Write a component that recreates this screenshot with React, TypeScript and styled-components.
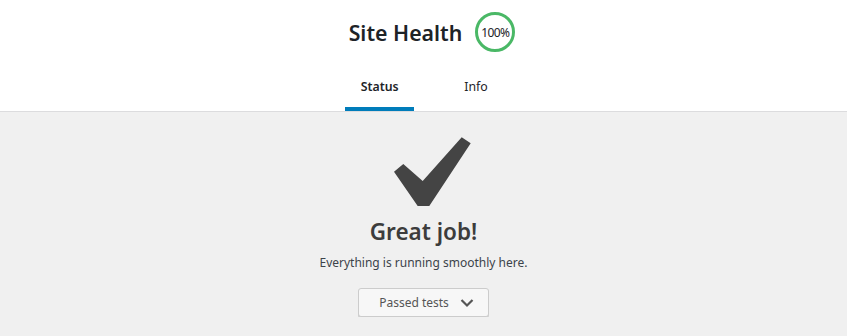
import React from "react";
import styled, { createGlobalStyle } from "styled-components";

const GlobalStyle = createGlobalStyle`
    html, body {
        margin: 0;
        padding: 0;
        background: #f0f0f0;
        font-family: "Noto Sans", "Open Sans", sans-serif;
        color: #1d2327;
    }
`

const Header = styled.header`
    background: #fff;
    border-bottom: 1px solid #dcdcde;
    display: flex;
    flex-direction: column;
    align-items: center;
    padding-top: 12px;
`

const TitleRow = styled.div`
    display: flex;
    align-items: center;
    gap: 13px;
    height: 40px;
    padding-left: 17px;
`

const Title = styled.h1`
    margin: 0;
    font-size: 21.3px;
    font-weight: 600;
    color: #1d2327;
`

const Score = styled.div`
    box-sizing: border-box;
    width: 40px;
    height: 40px;
    border-radius: 50%;
    border: 3px solid #4ab866;
    display: flex;
    align-items: center;
    justify-content: center;
    font-size: 12px;
    color: #1d2327;
    letter-spacing: -0.6px;
`

const Tabs = styled.nav`
    display: flex;
    margin-top: 11px;
`

const Tab = styled.a<{ $active?: boolean }>`
    box-sizing: border-box;
    display: flex;
    align-items: center;
    justify-content: center;
    height: 48px;
    margin: 0 18px;
    padding: 2px 14px 0;
    font-size: 12.3px;
    font-weight: ${p => (p.$active ? 600 : 400)};
    color: #1d2327;
    text-decoration: none;
    border-bottom: 4px solid ${p => (p.$active ? "#007cba" : "transparent")};
    min-width: ${p => (p.$active ? "69px" : "50px")};
`

const Body = styled.main`
    display: flex;
    flex-direction: column;
    align-items: center;
    padding-top: 24px;
`

const Heading = styled.h2`
    margin: 8px 0 0;
    font-size: 22.5px;
    font-weight: 600;
    color: #3c3c3c;
`

const Text = styled.p`
    margin: 7px 0 0;
    font-size: 12px;
    color: #3c434a;
`

const ToggleButton = styled.button`
    margin-top: 17px;
    width: 131px;
    height: 29px;
    display: flex;
    align-items: center;
    justify-content: center;
    gap: 11px;
    background: #f7f7f7;
    border: 1px solid #ccc;
    border-radius: 3px;
    box-shadow: 0 1px 0 #ccc;
    font-family: inherit;
    font-size: 12px;
    color: #555;
    padding: 0 0 0 6px;
`

const CheckSvg = styled.svg`
    margin-left: 16px;
`

const CheckIcon = () => (
    <CheckSvg width="80" height="72" viewBox="0 0 80 72">
        <polygon
            points="2,35.7 11.3,28 30.7,45 69.7,1.3 78.7,7.3 37.3,70 25.7,70"
            fill="#444"
        />
    </CheckSvg>
)

const Chevron = () => (
    <svg width="14" height="10" viewBox="0 0 14 10">
        <polyline points="1.5,2 7,7.5 12.5,2" fill="none" stroke="#555" strokeWidth="2.2" />
    </svg>
)

export default function App() {
    return (
        <>
            <GlobalStyle />
            <Header>
                <TitleRow>
                    <Title>Site Health</Title>
                    <Score>100%</Score>
                </TitleRow>
                <Tabs>
                    <Tab $active>Status</Tab>
                    <Tab>Info</Tab>
                </Tabs>
            </Header>
            <Body>
                <CheckIcon />
                <Heading>Great job!</Heading>
                <Text>Everything is running smoothly here.</Text>
                <ToggleButton>
                    Passed tests
                    <Chevron />
                </ToggleButton>
            </Body>
        </>
    )
}
